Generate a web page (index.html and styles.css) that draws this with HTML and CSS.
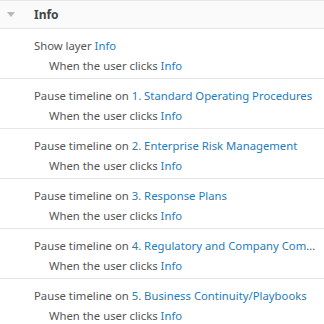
FILE: index.html
```html
<!DOCTYPE html>
<html lang="en">

<head>
    <meta charset="UTF-8">
    <title>Info triggers</title>
    <link rel="stylesheet" href="styles.css">
</head>

<body>
    <section class="group">
        <div class="group-head">
            <span class="caret"></span>
            <span class="group-title">Info</span>
        </div>

        <div class="row">
            <p class="action">Show layer <a>Info</a></p>
            <p class="when">When the user clicks <a>Info</a></p>
        </div>
        <div class="row">
            <p class="action">Pause timeline on <a>1. Standard Operating Procedures</a></p>
            <p class="when">When the user clicks <a>Info</a></p>
        </div>
        <div class="row">
            <p class="action">Pause timeline on <a>2. Enterprise Risk Management</a></p>
            <p class="when">When the user clicks <a>Info</a></p>
        </div>
        <div class="row">
            <p class="action">Pause timeline on <a>3. Response Plans</a></p>
            <p class="when">When the user clicks <a>Info</a></p>
        </div>
        <div class="row">
            <p class="action">Pause timeline on <a>4. Regulatory and Company Compliance Requirements</a></p>
            <p class="when">When the user clicks <a>Info</a></p>
        </div>
        <div class="row">
            <p class="action">Pause timeline on <a>5. Business Continuity/Playbooks</a></p>
            <p class="when">When the user clicks <a>Info</a></p>
        </div>
    </section>
</body>

</html>
```

FILE: styles.css
```css
* {
    margin: 0;
    padding: 0;
    box-sizing: border-box;
}

body {
    background: #fff;
    font-family: 'Noto Sans', sans-serif;
    font-size: 11.3px;
    color: #555;
    overflow: hidden;
}

.group-head {
    display: flex;
    align-items: center;
    height: 29px;
    background-color: #fafafa;
    border-top: 1px solid #e6e6e6;
    border-bottom: 1px solid #e6e6e6;
}

.caret {
    width: 0;
    height: 0;
    margin-left: 7px;
    border-left: 4px solid transparent;
    border-right: 4px solid transparent;
    border-top: 5px solid #b8b8b8;
}

.group-title {
    margin-left: 19px;
    font-size: 12px;
    font-weight: bold;
    color: #454545;
}

.row {
    height: 50px;
    padding: 7px 8px 0 34px;
    border-bottom: 1px solid #e6e6e6;
}

.row p {
    white-space: nowrap;
    overflow: hidden;
    text-overflow: ellipsis;
    line-height: 20px;
}

.row .when {
    padding-left: 15px;
}

.row a {
    color: #2b7bb3;
}
```
